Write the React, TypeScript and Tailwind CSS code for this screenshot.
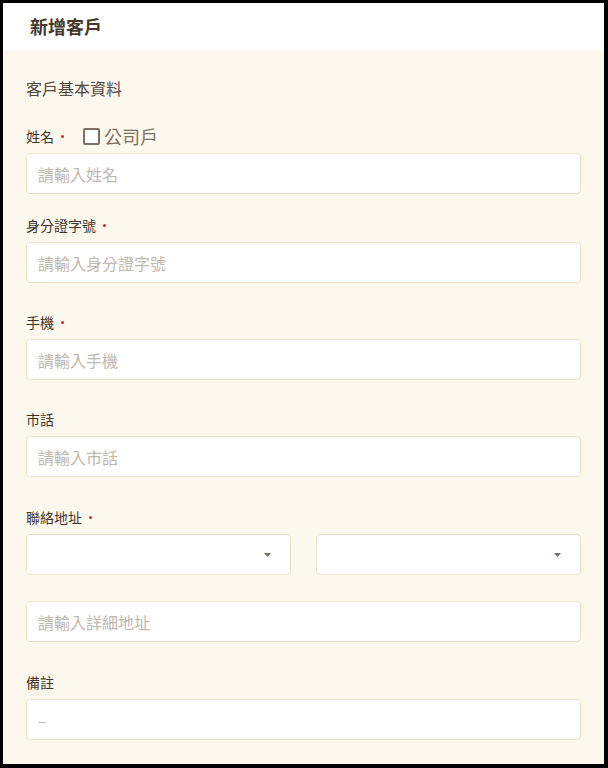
import React from "react";

const font = { fontFamily: '"Noto Sans CJK TC", "Noto Sans", sans-serif' };

function Label({ text, required }: { text: string; required?: boolean }) {
  return (
    <div className="flex items-center h-[20px] text-[14px] leading-[20px] font-normal text-[#3f342a]">
      <span>{text}</span>
      {required && <span className="ml-[7px] w-[3px] h-[3px] rounded-full bg-[#d0262a]" />}
    </div>
  );
}

function Input({ placeholder }: { placeholder: string }) {
  return (
    <div className="h-[41px] rounded-[4px] border border-[#ebdfc6] bg-white flex items-center px-[11px] text-[16px] text-[#bfb8ae]">
      {placeholder}
    </div>
  );
}

function Select() {
  return (
    <div className="flex-1 h-[41px] rounded-[4px] border border-[#ebdfc6] bg-white flex items-center justify-end pr-[19px]">
      <svg width="7" height="4" viewBox="0 0 7 4">
        <path d="M0 0 L7 0 L3.5 4 Z" fill="#7d7062" />
      </svg>
    </div>
  );
}

export default function App() {
  return (
    <div className="w-[608px] h-[768px] bg-black pt-[3px] pl-[3px] pr-[4px] pb-[4px]" style={font}>
      <div className="flex flex-col h-full">
        <div className="h-[47px] bg-white pl-[27px] flex items-center text-[18px] font-bold text-[#45372a]">
          新增客戶
        </div>
        <div className="flex-1 bg-[#fdf8ee] px-[23px] pt-[26px]">
          <div className="text-[16px] leading-[24px] text-[#54473a]">客戶基本資料</div>

          <div className="mt-[26px] flex items-center h-[20px]">
            <Label text="姓名" required />
            <div className="ml-[19px] flex items-center">
              <span className="w-[17px] h-[17px] border-2 border-[#7d7062] rounded-[2px] bg-white" />
              <span className="ml-[4px] text-[18px] leading-[20px] text-[#7d7062]">公司戶</span>
            </div>
          </div>
          <div className="mt-[7px]"><Input placeholder="請輸入姓名" /></div>

          <div className="mt-[21px]"><Label text="身分證字號" required /></div>
          <div className="mt-[7px]"><Input placeholder="請輸入身分證字號" /></div>

          <div className="mt-[29px]"><Label text="手機" required /></div>
          <div className="mt-[7px]"><Input placeholder="請輸入手機" /></div>

          <div className="mt-[29px]"><Label text="市話" /></div>
          <div className="mt-[7px]"><Input placeholder="請輸入市話" /></div>

          <div className="mt-[30px]"><Label text="聯絡地址" required /></div>
          <div className="mt-[7px] flex gap-[25px]">
            <Select />
            <Select />
          </div>
          <div className="mt-[26px]"><Input placeholder="請輸入詳細地址" /></div>

          <div className="mt-[30px]"><Label text="備註" /></div>
          <div className="mt-[7px]"><Input placeholder="–" /></div>
        </div>
      </div>
    </div>
  );
}
